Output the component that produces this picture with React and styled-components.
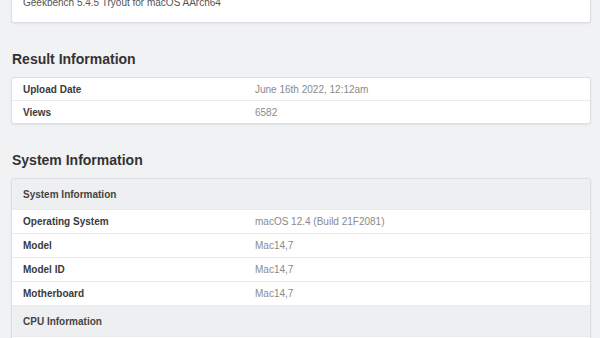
import React from 'react';
import styled, { createGlobalStyle } from 'styled-components';

const GlobalStyle = createGlobalStyle`
    html, body {
        margin: 0;
        padding: 0;
        background: #f1f2f4;
        font-family: 'Liberation Sans', Arial, Helvetica, sans-serif;
        overflow: hidden;
    }
`;

const resultInfo = [
    { label: 'Upload Date', value: 'June 16th 2022, 12:12am' },
    { label: 'Views', value: '6582' },
];

const systemInfo = [
    { section: 'System Information' },
    { label: 'Operating System', value: 'macOS 12.4 (Build 21F2081)' },
    { label: 'Model', value: 'Mac14,7' },
    { label: 'Model ID', value: 'Mac14,7' },
    { label: 'Motherboard', value: 'Mac14,7' },
    { section: 'CPU Information' },
    { label: 'CPU Name', value: 'Apple M2' },
];

const App = () => {
    const renderRows = (rows, compact) =>
        rows.map((row) =>
            row.section ? (
                <SectionRow key={row.section}>{row.section}</SectionRow>
            ) : (
                <Row key={row.label} $compact={compact}>
                    <Label>{row.label}</Label>
                    <Value>{row.value}</Value>
                </Row>
            )
        );

    return (
        <Page>
            <GlobalStyle />
            <TopCard>Geekbench 5.4.5 Tryout for macOS AArch64</TopCard>

            <Heading>Result Information</Heading>
            <Card>{renderRows(resultInfo, true)}</Card>

            <Heading>System Information</Heading>
            <Card>{renderRows(systemInfo)}</Card>
        </Page>
    );
};

export default App;

const Page = styled.div`
    width: 580px;
    padding: 0 9px 0 11px;
    margin-top: -5px;
`;

const Card = styled.div`
    background: #fff;
    border: 1px solid #dddee1;
    border-radius: 3px;
    box-shadow: 0 1px 2px rgba(0, 0, 0, 0.07);
    overflow: hidden;
`;

const TopCard = styled(Card)`
    padding: 0 11px 12px;
    font-size: 10px;
    line-height: 14px;
    color: #555;
`;

const Heading = styled.h2`
    margin: 28px 0 9px 1px;
    font-size: 14px;
    line-height: 17px;
    font-weight: bold;
    color: #333;
`;

const Row = styled.div`
    display: flex;
    align-items: center;
    height: ${(p) => (p.$compact ? '22px' : '23px')};
    padding: 0 11px;
    font-size: 10px;
    border-top: 1px solid #ebebed;

    &:first-child {
        border-top: none;
    }
`;

const SectionRow = styled(Row)`
    height: 30px;
    background: #eeeff1;
    color: #444;
    font-weight: bold;
`;

const Label = styled.div`
    flex: 0 0 232px;
    font-weight: bold;
    color: #3a3a3a;
`;

const Value = styled.div`
    flex: 1;
    color: #888a8c;
`;
